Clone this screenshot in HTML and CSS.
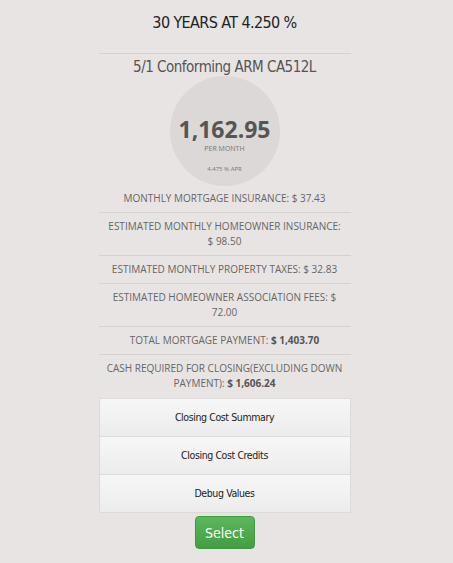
FILE: index.html
```html
<!DOCTYPE html>
<html>
<head>
    <meta charset="UTF-8">
    <title>Loan option</title>
    <link rel="stylesheet" href="styles.css">
</head>
<body>
    <div class="container">
        <h1 class="term">30 YEARS AT 4.250 %</h1>
        <h2 class="product">5/1 Conforming ARM CA512L</h2>
        <div class="payment">
            <div class="amount">1,162.95</div>
            <div class="per">PER MONTH</div>
            <div class="apr">4.475 % APR</div>
        </div>
        <ul class="details">
            <li>MONTHLY MORTGAGE INSURANCE: $ 37.43</li>
            <li>ESTIMATED MONTHLY HOMEOWNER INSURANCE: $ 98.50</li>
            <li>ESTIMATED MONTHLY PROPERTY TAXES: $ 32.83</li>
            <li>ESTIMATED HOMEOWNER ASSOCIATION FEES: $ 72.00</li>
            <li>TOTAL MORTGAGE PAYMENT: <b>$ 1,403.70</b></li>
            <li>CASH REQUIRED FOR CLOSING(EXCLUDING DOWN PAYMENT): <b>$ 1,606.24</b></li>
        </ul>
        <div class="panels">
            <div class="panel">Closing Cost Summary</div>
            <div class="panel">Closing Cost Credits</div>
            <div class="panel">Debug Values</div>
        </div>
        <button class="select">Select</button>
    </div>
</body>
</html>
```

FILE: styles.css
```css
body, html {
    margin: 0;
    padding: 0;
    background: #e8e4e3;
    font-family: "Open Sans", sans-serif;
}
.container {
    width: 252px;
    margin: 0 auto;
    padding: 13px 4px 0 0;
    display: flex;
    flex-direction: column;
    align-items: center;
}
.term {
    margin: 0;
    height: 40px;
    font-family: "DejaVu Sans Condensed", sans-serif;
    font-weight: normal;
    font-size: 16px;
    color: #222;
    letter-spacing: -0.6px;
}
.product {
    margin: 0;
    width: 100%;
    text-align: center;
    border-top: 1px solid #d6d2d1;
    padding-top: 4px;
    font-family: "DejaVu Sans Condensed", sans-serif;
    font-weight: normal;
    font-size: 15px;
    color: #555;
    letter-spacing: -0.5px;
}
.payment {
    width: 110px;
    height: 110px;
    border-radius: 50%;
    background: #dcd8d7;
    display: flex;
    flex-direction: column;
    align-items: center;
    color: #777;
}
.amount {
    font-size: 23px;
    font-weight: bold;
    color: #555;
    line-height: 26px;
    margin-top: 40px;
}
.per {
    font-size: 7px;
    line-height: 10px;
    margin-top: 2px;
}
.apr {
    font-size: 6px;
    margin-top: 11px;
}
.details {
    list-style: none;
    margin: -1px 0 0;
    padding: 0;
    width: 100%;
}
.details li {
    text-align: center;
    font-size: 10px;
    line-height: 15px;
    color: #666;
    padding: 6px 7px;
    border-bottom: 1px solid #d6d2d1;
}
.details li:last-child {
    border-bottom: none;
    padding-bottom: 7px;
}
.details b {
    color: #555;
}
.panels {
    width: 250px;
    border: 1px solid #dedada;
}
.panel {
    height: 37px;
    line-height: 37px;
    text-align: center;
    font-family: "DejaVu Sans Condensed", sans-serif;
    font-size: 10.5px;
    letter-spacing: -0.4px;
    color: #222;
    background: linear-gradient(#f7f7f7, #ececec);
    border-bottom: 1px solid #dcdcdc;
}
.panel:last-child {
    border-bottom: none;
}
.select {
    margin-top: 3px;
    width: 60px;
    height: 33px;
    border: 1px solid #3d9a3d;
    border-radius: 4px;
    background: linear-gradient(#5cb85c, #449d44);
    color: #fff;
    font-family: "DejaVu Sans Condensed", sans-serif;
    font-size: 14px;
}
```
